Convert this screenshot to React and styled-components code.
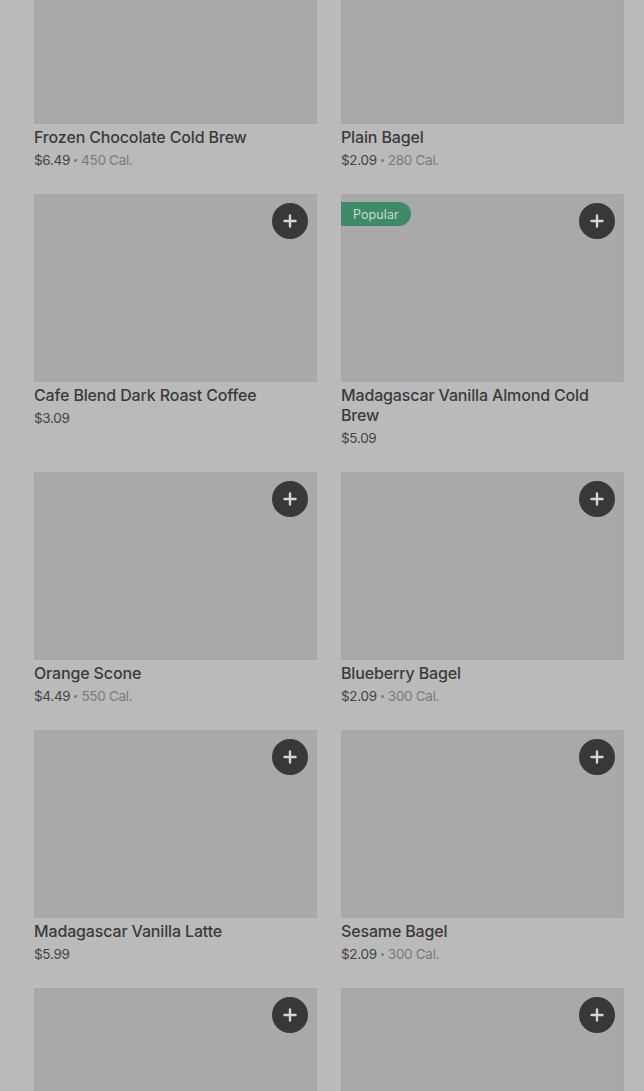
import styled, { createGlobalStyle } from 'styled-components';

const GlobalStyle = createGlobalStyle`
  html, body {
    margin: 0;
    padding: 0;
    background: #bababa;
    overflow: hidden;
  }
  body {
    font-family: Inter, "Noto Sans", "Liberation Sans", sans-serif;
  }
`;

const items = [
  { name: 'Frozen Chocolate Cold Brew', price: '$6.49', cal: '450 Cal.', noAdd: true },
  { name: 'Plain Bagel', price: '$2.09', cal: '280 Cal.', noAdd: true },
  { name: 'Cafe Blend Dark Roast Coffee', price: '$3.09' },
  { name: 'Madagascar Vanilla Almond Cold Brew', price: '$5.09', popular: true },
  { name: 'Orange Scone', price: '$4.49', cal: '550 Cal.' },
  { name: 'Blueberry Bagel', price: '$2.09', cal: '300 Cal.' },
  { name: 'Madagascar Vanilla Latte', price: '$5.99' },
  { name: 'Sesame Bagel', price: '$2.09', cal: '300 Cal.' },
  { name: 'Iced Brown Sugar Oatmilk Shaken Espresso', price: '$5.79' },
  { name: 'Everything Bagel', price: '$2.09', cal: '290 Cal.' },
];

function App() {
  return (
    <>
      <GlobalStyle />
      <Grid>
        {items.map((item) => (
          <Card key={item.name}>
            <Thumb>
              {item.popular && <Badge>Popular</Badge>}
              {!item.noAdd && (
                <AddButton aria-label={`Add ${item.name}`}>
                  <svg width="14" height="14" viewBox="0 0 14 14">
                    <path d="M7 1.5v11M1.5 7h11" stroke="#d4d4d4" strokeWidth="2.4" strokeLinecap="round" />
                  </svg>
                </AddButton>
              )}
            </Thumb>
            <Title>{item.name}</Title>
            <Meta>
              <span>{item.price}</span>
              {item.cal && (
                <>
                  <Dot />
                  <Cal>{item.cal}</Cal>
                </>
              )}
            </Meta>
          </Card>
        ))}
      </Grid>
    </>
  );
}

const Grid = styled.div`
  display: grid;
  grid-template-columns: 283px 283px;
  column-gap: 24px;
  padding-left: 34px;
  margin-top: -64px;
`;

const Card = styled.div`
  display: flex;
  flex-direction: column;
  padding-bottom: 24px;
`;

const Thumb = styled.div`
  position: relative;
  height: 188px;
  background: #a9a9a9;
  box-shadow: inset 0 0 0 1px #a6a6a6;
`;

const Badge = styled.span`
  position: absolute;
  top: 8px;
  left: 0;
  height: 24px;
  padding: 0 12px 0 12px;
  display: flex;
  align-items: center;
  background: #3f8a68;
  color: #c9d9d0;
  font-size: 12.5px;
  letter-spacing: 0.1px;
  border-radius: 0 12px 12px 0;
`;

const AddButton = styled.button`
  position: absolute;
  top: 9px;
  right: 9px;
  width: 36px;
  height: 36px;
  border: none;
  border-radius: 50%;
  background: #383838;
  display: flex;
  align-items: center;
  justify-content: center;
  padding: 0;
  cursor: pointer;
`;

const Title = styled.div`
  margin-top: 3px;
  font-size: 16px;
  font-weight: 500;
  line-height: 20px;
  color: #3b3b3b;
  letter-spacing: -0.15px;
`;

const Meta = styled.div`
  margin-top: 3px;
  height: 20px;
  display: flex;
  align-items: center;
  font-size: 13.5px;
  line-height: 20px;
  color: #444;
  letter-spacing: -0.3px;
`;

const Dot = styled.span`
  width: 3px;
  height: 3px;
  border-radius: 50%;
  background: #7a7a7a;
  margin: 1px 4px 0;
`;

const Cal = styled.span`
  color: #7a7a7a;
`;

export default App;
